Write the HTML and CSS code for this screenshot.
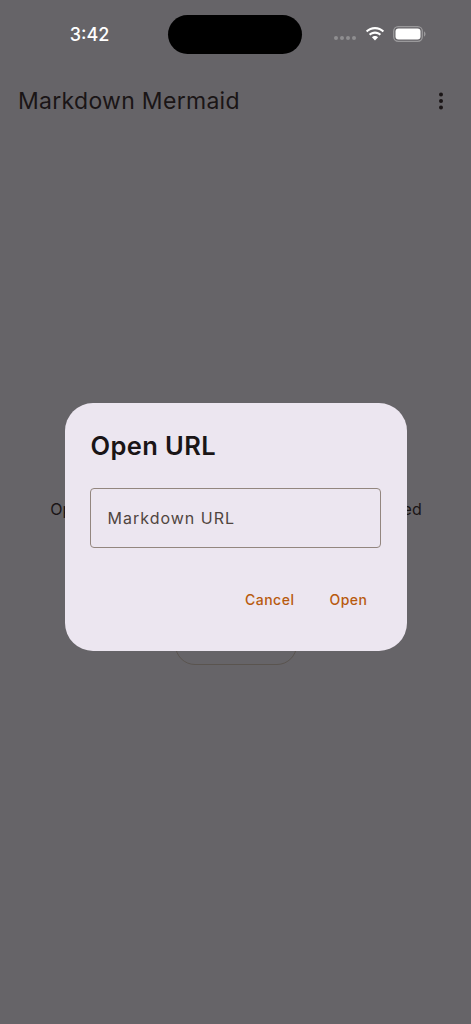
FILE: index.html
```html
<!DOCTYPE html>
<html lang="en">
<head>
<meta charset="utf-8">
<title>Markdown Mermaid</title>
<link rel="stylesheet" href="styles.css">
</head>
<body>
<div class="screen">
  <div class="status">
    <span class="time">3:42</span>
    <span class="island"></span>
    <div class="status-icons">
      <span class="dots"><i></i><i></i><i></i><i></i></span>
      <svg class="wifi" width="20" height="15" viewBox="0 0 20 15"><path d="M10 2.200c3 0 5.700 1.200 7.700 3.100l1.400-1.500C16.700 1.500 13.500 0 10 0S3.300 1.500.9 3.800l1.400 1.500C4.300 3.400 7 2.200 10 2.200z" fill="#fff"/><path d="M10 6.700c1.800 0 3.400.7 4.600 1.800l1.500-1.500C14.500 5.400 12.400 4.500 10 4.500S5.500 5.400 3.900 7l1.500 1.500C6.600 7.400 8.200 6.700 10 6.700z" fill="#fff"/><path d="M10 9c-1.200 0-2.300.5-3.100 1.200L10 13.500l3.100-3.300C12.300 9.500 11.200 9 10 9z" fill="#fff"/></svg>
      <svg class="battery" width="33" height="16" viewBox="0 0 33 16"><rect x=".7" y=".7" width="28.600" height="14.600" rx="4.500" fill="none" stroke="#9a999b" stroke-width="1.300"/><rect x="2.500" y="2.500" width="25" height="11" rx="3" fill="#fff"/><path d="M31 5.500c1 .3 1.500 1.300 1.500 2.500s-.5 2.200-1.500 2.500z" fill="#9a999b"/></svg>
    </div>
  </div>
  <header class="appbar">
    <h1 class="title">Markdown Mermaid</h1>
    <svg class="menu" width="6" height="18" viewBox="0 0 6 18"><circle cx="3" cy="2.500" r="2" fill="#1a1516"/><circle cx="3" cy="9" r="2" fill="#1a1516"/><circle cx="3" cy="15.500" r="2" fill="#1a1516"/></svg>
  </header>
  <main class="content">
    <p class="empty">Open a Markdown file or enter URL to get started</p>
    <span class="ghost-button"></span>
  </main>
  <div class="dialog" role="dialog">
    <h2 class="dialog-title">Open URL</h2>
    <div class="field">Markdown URL</div>
    <div class="actions">
      <span class="action">Cancel</span>
      <span class="action">Open</span>
    </div>
  </div>
</div>
</body>
</html>
```

FILE: styles.css
```css
* { box-sizing: border-box; }
html, body { margin: 0; padding: 0; }
body { background: #666468; font-family: Inter, Roboto, "Liberation Sans", sans-serif; }
.screen { position: relative; width: 471px; height: 1024px; overflow: hidden; background: #666468; display: flex; flex-direction: column; }
.status { height: 69px; position: relative; display: flex; align-items: flex-start; padding: 15px 0 0 0; }
.time { width: 168px; padding: 9px 0 0 11px; text-align: center; color: #fff; font-size: 18px; font-weight: 500; line-height: 22px; }
.island { width: 134px; height: 39px; background: #000; border-radius: 20px; }
.status-icons { display: flex; align-items: center; margin-left: 32px; height: 38px; }
.dots { display: flex; gap: 2px; margin-top: 7px; }
.dots i { width: 4px; height: 4px; border-radius: 50%; background: #8f8e90; display: block; }
.wifi { margin-left: 9px; margin-top: 1px; }
.battery { margin-left: 8px; margin-top: 0; }
.appbar { height: 64px; display: flex; align-items: center; justify-content: space-between; padding: 0 27px 0 18px; }
.title { margin: 0; font-size: 23px; font-weight: 400; color: #1a1516; line-height: 36px; letter-spacing: .3px; }
.content { flex: 1; display: flex; flex-direction: column; align-items: center; padding-top: 364px; }
.empty { margin: 0; padding-left: 1px; font-size: 16px; line-height: 24px; color: #1a1516; white-space: nowrap; }
.ghost-button { width: 122px; height: 80px; border: 1px solid #5a544f; border-radius: 20px; margin-top: 64px; }
.dialog { position: absolute; left: 64.500px; top: 403px; width: 342px; height: 248px; background: #ece6f0; border-radius: 28px; padding: 24px 26px 0 25.500px; }
.dialog-title { margin: 0 0 0 .5px; font-size: 25.500px; line-height: 37px; font-weight: 600; color: #1a1516; letter-spacing: .4px; }
.field { margin-top: 24px; height: 60px; border: 1px solid #93867f; border-radius: 4px; padding: 0 16px 0 16.500px; display: flex; align-items: center; font-size: 16px; letter-spacing: 1px; color: #50453f; }
.actions { display: flex; justify-content: flex-end; gap: 35px; margin-top: 38px; padding-right: 13px; }
.action { font-size: 14px; line-height: 28px; font-weight: 500; color: #b85a0e; letter-spacing: .5px; }
```
